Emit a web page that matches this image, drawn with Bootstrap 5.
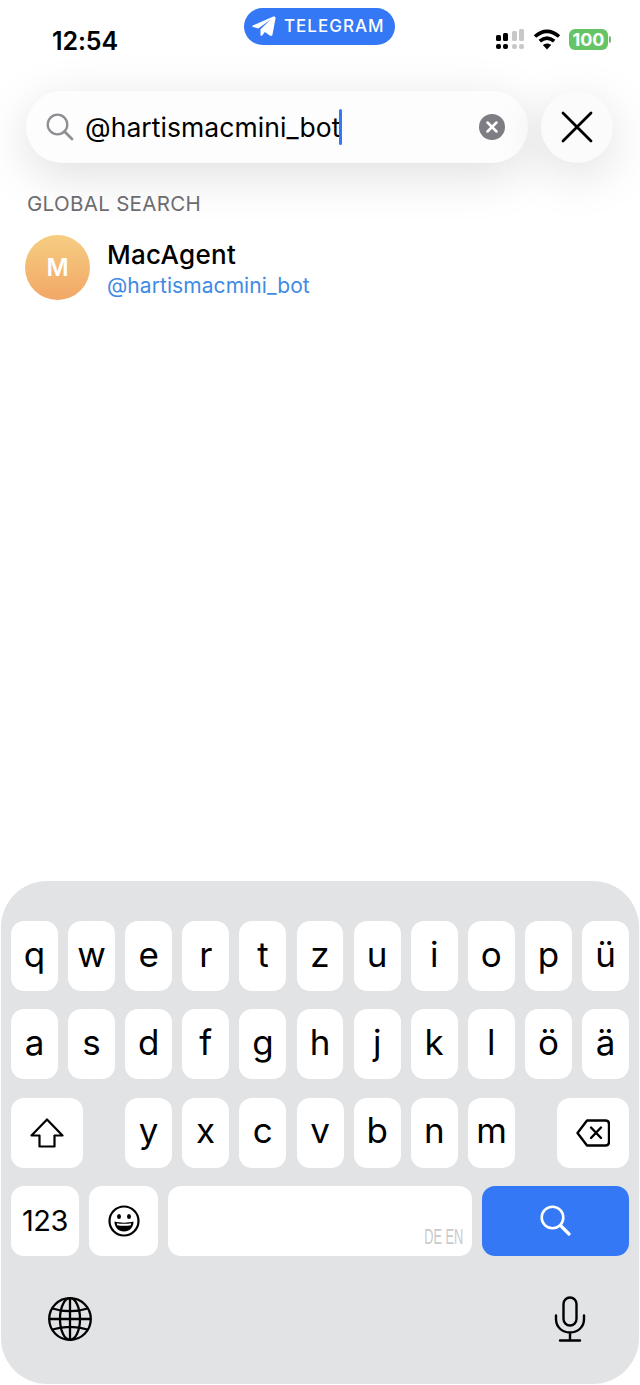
<!DOCTYPE html>
<html lang="de">

<head>
    <meta charset="UTF-8" />
    <meta name="viewport" content="width=device-width, initial-scale=1" />
    <title>Telegram Suche</title>
    <link href="https://cdn.jsdelivr.net/npm/bootstrap@5.3.3/dist/css/bootstrap.min.css" rel="stylesheet">
    <style>
        html, body { height: 100%; }
        body { font-family: Inter, "Liberation Sans", sans-serif; background: #fff; color: #000; overflow: hidden; }
        .screen { height: 1385px; }

        .status-bar { height: 91px; padding: 8px 30px 0 52px; display: grid; grid-template-columns: 192px 151px 1fr; }
        .status-time { font-size: 25px; font-weight: 600; line-height: 30px; margin-top: 18px; letter-spacing: -.1px; }
        .tg-pill { height: 37px; background: #3478f6; color: #fff; border-radius: 19px; font-size: 17px; font-weight: 500; letter-spacing: 1px; padding-left: 8px; }
        .status-icons { margin-top: 21px; gap: 8.5px; padding-left: 101px; }
        .batt-box { width: 39px; height: 21px; border-radius: 6px; background: #65c466; color: #fff; font-size: 18px; font-weight: 700; line-height: 21px; letter-spacing: 0; }
        .batt-nub { width: 2px; height: 7px; background: #65c466; border-radius: 0 2px 2px 0; margin-left: 1px; }

        .search-row { padding: 0 27px 0 26px; gap: 13px; }
        .search-box { height: 72px; border-radius: 36px; background: #fdfdfd; padding: 0 23px 0 20px; box-shadow: 0 12px 50px rgba(0, 0, 0, .13); }
        .search-text { font-size: 26.5px; letter-spacing: .06px; margin-left: 11px; line-height: 36px; }
        .text-caret { width: 3px; height: 36px; background: #3478f6; border-radius: 2px; margin-left: -1px; }
        .close-round { width: 72px; height: 72px; border-radius: 50%; background: #fbfbfb; box-shadow: 0 12px 50px rgba(0, 0, 0, .13); }

        .section-label { font-size: 20.5px; color: #6c6c70; margin: 29px 0 0 27px; line-height: 24px; letter-spacing: .32px; }
        .result-row { padding: 19px 0 0 25px; gap: 17px; }
        .avatar-m { width: 65px; height: 65px; border-radius: 50%; background: linear-gradient(#f6cd82, #f2a767); color: #fff; font-size: 24px; font-weight: 600; }
        .result-text { margin-top: 4px; }
        .result-name { font-size: 26px; font-weight: 500; line-height: 32px; letter-spacing: .3px; }
        .result-user { font-size: 21px; color: #3f8ae4; line-height: 27px; margin-top: 1px; letter-spacing: .07px; }

        .kb-panel { height: 503px; margin: auto 1px 1px; padding: 40px 10px 0; background: #e1e3e5; border-radius: 46px; }
        .kb-row { gap: 10.2px; margin-bottom: 18.3px; height: 70px; }
        .kb-key { height: 70px; flex: 1 1 0; min-width: 0; background: #fff; border-radius: 13px; font-size: 35px; line-height: 1; padding-bottom: 4px; }
        .kb-letters { width: 390px; gap: 10.2px; }
        .kb-side { flex: 0 0 72px; padding-bottom: 0; }
        .kb-num { flex: 0 0 68px; font-size: 29px; padding-bottom: 0; letter-spacing: -.5px; }
        .kb-emoji { flex: 0 0 69px; padding-bottom: 0; }
        .kb-space { flex: 0 0 303.5px; padding: 0 8.5px 8px 0; font-family: "Liberation Sans", sans-serif; font-size: 22px; color: #c9cacc; }
        .kb-space span { display: block; transform: scaleX(.58); transform-origin: right; line-height: 1; }
        .kb-go { flex: 0 0 147px; background: #3478f6; padding-bottom: 0; }
        .kb-bottom { padding: 22px 43px 0 37px; }
    </style>
</head>

<body>
    <div class="screen d-flex flex-column">
        <!-- status bar -->
        <div class="status-bar">
            <div class="status-time">12:54</div>
            <div class="tg-pill d-flex align-items-center gap-2">
                <svg width="24" height="21" viewBox="0 0 24 21" class="flex-shrink-0"><path fill="#fff" d="M1.200 9.300 21.300.6c1.300-.5 2.500.4 2.200 1.900l-3 15.900c-.3 1.400-1.500 1.900-2.700 1.100l-5-3.500-2.600 3.400c-.6.8-1.700.5-1.700-.6v-5.600L18.700 3.600 6.300 12.500 1.100 11c-1.200-.4-1.200-1.200.1-1.700z"/></svg>
                <span>TELEGRAM</span>
            </div>
            <div class="status-icons d-flex align-items-center align-self-start">
                <svg width="28" height="21" viewBox="0 0 28 21" class="flex-shrink-0">
                    <g fill="#000">
                        <rect x="0" y="6" width="5" height="6" rx="1.500"/><rect x="7" y="4" width="5" height="8" rx="1.500"/>
                        <rect x="0" y="15" width="5" height="5" rx="2"/><rect x="7" y="15" width="5" height="5" rx="2"/>
                    </g>
                    <g fill="#c8c8c8">
                        <rect x="16" y="2" width="5" height="10" rx="1.500"/><rect x="23" y="0" width="5" height="12" rx="1.500"/>
                        <rect x="16" y="15" width="5" height="5" rx="2"/><rect x="23" y="15" width="5" height="5" rx="2"/>
                    </g>
                </svg>
                <svg width="28" height="21" viewBox="0 0 28 21" class="flex-shrink-0">
                    <path fill="none" stroke="#000" stroke-width="3.600" d="M2 7.500C9.500 .6 18.500 .6 26 7.500M6.800 12.200c4.700-4.100 9.700-4.100 14.400 0"/>
                    <path fill="#000" d="M14 20.500 9.800 16c2.600-2 5.800-2 8.400 0z"/>
                </svg>
                <div class="d-flex align-items-center flex-shrink-0">
                    <div class="batt-box text-center">100</div>
                    <div class="batt-nub"></div>
                </div>
            </div>
        </div>

        <!-- search -->
        <div class="search-row d-flex">
            <div class="search-box flex-grow-1 d-flex align-items-center">
                <svg width="28" height="28" viewBox="0 0 28 28" class="flex-shrink-0">
                    <circle cx="11.500" cy="11.500" r="9.800" fill="none" stroke="#8e8e93" stroke-width="2.300"/>
                    <path d="M18.500 18.500 26 26" stroke="#8e8e93" stroke-width="2.800" stroke-linecap="round"/>
                </svg>
                <span class="search-text">@hartismacmini_bot</span>
                <span class="text-caret"></span>
                <svg width="26" height="26" viewBox="0 0 26 26" class="ms-auto flex-shrink-0">
                    <circle cx="13" cy="13" r="13" fill="#7d7d83"/>
                    <path d="M8.500 8.500 17.500 17.500M17.500 8.500 8.500 17.500" stroke="#fff" stroke-width="2.500" stroke-linecap="round"/>
                </svg>
            </div>
            <div class="close-round d-flex align-items-center justify-content-center flex-shrink-0">
                <svg width="32" height="32" viewBox="0 0 32 32">
                    <path d="M2 2 30 30M30 2 2 30" stroke="#000" stroke-width="2.800" stroke-linecap="round"/>
                </svg>
            </div>
        </div>

        <!-- results -->
        <div class="section-label">GLOBAL SEARCH</div>
        <div class="result-row d-flex">
            <div class="avatar-m d-flex align-items-center justify-content-center flex-shrink-0">M</div>
            <div class="result-text">
                <div class="result-name">MacAgent</div>
                <div class="result-user">@hartismacmini_bot</div>
            </div>
        </div>

        <!-- keyboard -->
        <div class="kb-panel">
            <div id="row-one" class="kb-row d-flex"></div>
            <div id="row-two" class="kb-row d-flex"></div>
            <div class="kb-row d-flex justify-content-between">
                <div class="kb-key kb-side d-flex align-items-center justify-content-center">
                    <svg width="34" height="30" viewBox="0 0 34 30"><path fill="none" stroke="#000" stroke-width="2.200" stroke-linejoin="round" d="M17 1.500 32.500 17.500H24.500V28.500H9.500V17.500H1.500z"/></svg>
                </div>
                <div id="row-three" class="kb-letters d-flex"></div>
                <div class="kb-key kb-side d-flex align-items-center justify-content-center">
                    <svg width="34" height="28" viewBox="0 0 34 28">
                        <path fill="none" stroke="#000" stroke-width="2.400" stroke-linejoin="round" d="M11 1.500H29.500Q33 1.500 33 5V23Q33 26.500 29.500 26.500H11L1.500 14z"/>
                        <path d="M15 8.500 25 19M25 8.500 15 19" stroke="#000" stroke-width="2.400" stroke-linecap="round"/>
                    </svg>
                </div>
            </div>
            <div class="kb-row d-flex">
                <div class="kb-key kb-num d-flex align-items-center justify-content-center">123</div>
                <div class="kb-key kb-emoji d-flex align-items-center justify-content-center">
                    <svg width="32" height="32" viewBox="0 0 32 32">
                        <circle cx="16" cy="16" r="14.500" fill="none" stroke="#000" stroke-width="2.200"/>
                        <ellipse cx="11" cy="11.500" rx="2" ry="2.500"/><ellipse cx="21" cy="11.500" rx="2" ry="2.500"/>
                        <path d="M6.500 16.500C11 18 21 18 25.500 16.500 25.500 22.500 21.500 26.500 16 26.500S6.500 22.500 6.500 16.500z"/>
                        <path fill="#fff" d="M8.800 18.200C12 19 20 19 23.200 18.200L22.800 20.300C19 21 13 21 9.200 20.300z"/>
                    </svg>
                </div>
                <div class="kb-key kb-space d-flex align-items-end justify-content-end"><span>DE EN</span></div>
                <div class="kb-key kb-go d-flex align-items-center justify-content-center">
                    <svg width="31" height="31" viewBox="0 0 31 31">
                        <circle cx="12.500" cy="12.500" r="10.800" fill="none" stroke="#fff" stroke-width="2.600"/>
                        <path d="M20.500 20.500 29 29" stroke="#fff" stroke-width="3.200" stroke-linecap="round"/>
                    </svg>
                </div>
            </div>
            <div class="kb-bottom d-flex justify-content-between align-items-center">
                <svg width="44" height="44" viewBox="0 0 44 44" fill="none" stroke="#000" stroke-width="2.300">
                    <circle cx="22" cy="22" r="20.800"/>
                    <ellipse cx="22" cy="22" rx="10" ry="20.800"/>
                    <path d="M22 1V43M1.200 22H42.800M4.500 11.500C15 15 29 15 39.500 11.500M4.500 32.500C15 29 29 29 39.500 32.500"/>
                </svg>
                <svg width="32" height="46" viewBox="0 0 32 46" fill="none" stroke="#000" stroke-width="2.400" stroke-linecap="round">
                    <rect x="9.500" y="1.500" width="13" height="28" rx="6.500"/>
                    <path d="M2 19.500V23C2 31 8 36.500 16 36.500S30 31 30 23V19.500M16 36.500V44.500M6 44.500H26"/>
                </svg>
            </div>
        </div>
    </div>

    <script>
        // letter keys for the three rows
        function fillRow(id, letters) {
            const box = document.getElementById(id);
            letters.split("").forEach(ch => {
                const key = document.createElement("div");
                key.className = "kb-key d-flex align-items-center justify-content-center";
                key.textContent = ch;
                box.appendChild(key);
            });
        }
        fillRow("row-one", "qwertzuiopü");
        fillRow("row-two", "asdfghjklöä");
        fillRow("row-three", "yxcvbnm");
    </script>
    <script src="https://cdn.jsdelivr.net/npm/bootstrap@5.3.3/dist/js/bootstrap.bundle.min.js"></script>
</body>

</html>
